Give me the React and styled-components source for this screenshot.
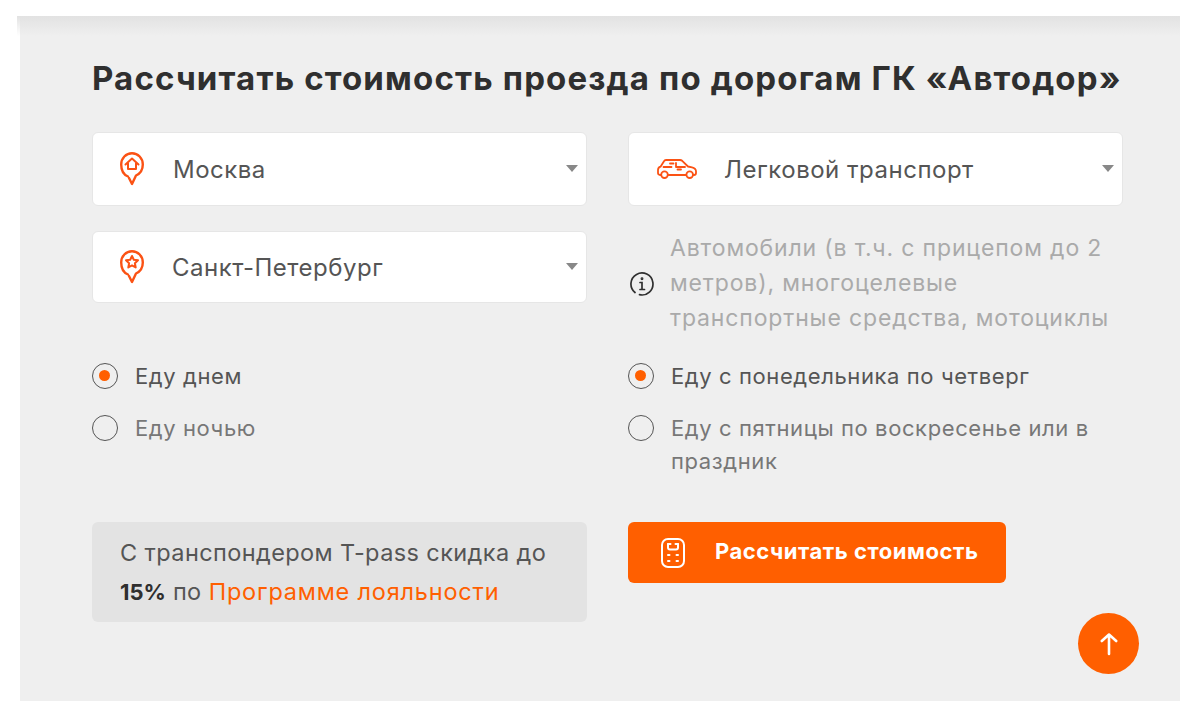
import React from 'react';
import styled, { createGlobalStyle } from 'styled-components';

const ORANGE = '#ff5f00';

const HomePin = () => (
  <svg width="24" height="34" viewBox="0 0 24 34" fill="none" stroke="#fb5214" strokeWidth="2.400" strokeLinecap="round" strokeLinejoin="round">
    <path d="M8 24.500C3.800 22.800 1.200 18.900 1.200 12.500 1.200 6.200 6 1.200 12 1.200s10.800 5 10.800 11.300c0 4.900-2.900 9.200-6.800 11L12 32l-3-6" />
    <path d="M5.500 12.500 12 6.500l6.500 6M8 11v6h8v-6" strokeWidth="2" />
  </svg>
);

const StarPin = () => (
  <svg width="24" height="34" viewBox="0 0 24 34" fill="none" stroke="#fb5214" strokeWidth="2.400" strokeLinecap="round" strokeLinejoin="round">
    <path d="M8 24.500C3.800 22.800 1.200 18.900 1.200 12.500 1.200 6.200 6 1.200 12 1.200s10.800 5 10.800 11.300c0 4.900-2.900 9.200-6.800 11L12 32l-3-6" />
    <path d="m12 6 1.800 3.800 4.200.5-3.100 2.900.8 4.300-3.700-2.100-3.700 2.100.8-4.300-3.100-2.900 4.200-.5z" strokeWidth="2" />
  </svg>
);

const CarIcon = () => (
  <svg width="40" height="20" viewBox="0 0 40 20" fill="none" stroke="#fb5214" strokeWidth="1.800" strokeLinecap="round" strokeLinejoin="round">
    <path d="M4 16H3c-1.200 0-2-.8-2-2v-3c0-1.600.8-2.800 2.500-3.300L7 2.200C7.400 1.400 8.200 1 9 1h14c.9 0 1.600.3 2.200.8L31 7.500l4 .8c2.200.5 4 2.100 4 4V14c0 1.200-.8 2-2 2h-.5" />
    <path d="M11.500 16H29" />
    <circle cx="7.500" cy="15.700" r="3.300" />
    <circle cx="32.700" cy="15.700" r="3.300" />
    <path d="M6.500 8h8M19 8h9M13 4.500h3.500M19 4v4M20.500 10.500H24" />
  </svg>
);

const InfoIcon = () => (
  <svg width="24" height="24" viewBox="0 0 24 24" fill="none" stroke="#2f2f2f" strokeWidth="1.700" strokeLinecap="round">
    <path d="M5 20.500A11 11 0 1 1 9.500 22.700" />
    <path d="M10 10.500h2v7M10 17.500h4.500" />
    <circle cx="12" cy="6.800" r="0.600" />
  </svg>
);

const CalcIcon = () => (
  <svg width="24" height="30" viewBox="0 0 24 30" fill="none" stroke="#fff" strokeWidth="2" strokeLinecap="round" strokeLinejoin="round">
    <rect x="1" y="1" width="22" height="28" rx="6" />
    <path d="M7 6v3.500c0 1.300.8 2 2 2h6c1.200 0 2-.7 2-2V6" />
    <path d="M7 6h2.500M14.500 6H17M7 17h1.500M15.500 17H17M7 23h1.500M15.500 23H17" />
  </svg>
);

const ArrowIcon = () => (
  <svg width="18" height="24" viewBox="0 0 18 24" fill="none" stroke="#fff" strokeWidth="2.600" strokeLinecap="round" strokeLinejoin="round">
    <path d="M9 22V2.500M1.800 9 9 2.500 16.200 9" />
  </svg>
);

const App = () => (
  <>
    <GlobalStyle />
    <Page>
      <Panel>
        <Title>Рассчитать стоимость проезда по дорогам ГК «Автодор»</Title>
        <FormGrid>
          <SelectBox $height={74} $iconGap={29} $iconLeft={27}>
            <HomePin />
            <SelectText>Москва</SelectText>
            <Caret />
          </SelectBox>
          <SelectBox $height={74} $iconGap={27} $iconLeft={28}>
            <CarIcon />
            <SelectText>Легковой транспорт</SelectText>
            <Caret />
          </SelectBox>
          <SelectBox $height={72} $iconGap={28} $iconLeft={27}>
            <StarPin />
            <SelectText>Санкт-Петербург</SelectText>
            <Caret />
          </SelectBox>
          <InfoRow>
            <InfoIcon />
            <InfoText>
              Автомобили (в т.ч. с прицепом до 2 метров), многоцелевые транспортные средства, мотоциклы
            </InfoText>
          </InfoRow>
          <RadioGroup>
            <RadioRow>
              <RadioMark $checked />
              <RadioLabel $checked>Еду днем</RadioLabel>
            </RadioRow>
            <RadioRow>
              <RadioMark />
              <RadioLabel>Еду ночью</RadioLabel>
            </RadioRow>
          </RadioGroup>
          <RadioGroup>
            <RadioRow>
              <RadioMark $checked />
              <RadioLabel $checked>Еду с понедельника по четверг</RadioLabel>
            </RadioRow>
            <RadioRow>
              <RadioMark />
              <RadioLabel>Еду с пятницы по воскресенье или в праздник</RadioLabel>
            </RadioRow>
          </RadioGroup>
          <Promo>
            <PromoLine>С транспондером T-pass скидка до</PromoLine>
            <PromoLine>
              <b>15%</b> по <PromoLink>Программе лояльности</PromoLink>
            </PromoLine>
          </Promo>
          <div>
            <CalcButton>
              <CalcIcon />
              Рассчитать стоимость
            </CalcButton>
          </div>
        </FormGrid>
        <ScrollTop>
          <ArrowIcon />
        </ScrollTop>
      </Panel>
    </Page>
  </>
);

export default App;

const GlobalStyle = createGlobalStyle`
  html, body {
    margin: 0;
    padding: 0;
    background: #fff;
    font-family: 'Inter', 'Noto Sans', sans-serif;
  }
`;

const Page = styled.div`
  width: 1200px;
  height: 722px;
  padding: 16px 20px 21px;
  box-sizing: border-box;
`;

const Panel = styled.div`
  position: relative;
  height: 100%;
  padding: 42px 57px 0 72px;
  box-sizing: border-box;
  background: #efefef;

  &::before {
    content: '';
    position: absolute;
    top: 0;
    left: -3px;
    right: 0;
    height: 20px;
    background: linear-gradient(#e2e2e2, rgba(239, 239, 239, 0));
  }
`;

const Title = styled.h1`
  position: relative;
  margin: 0;
  font-size: 33px;
  line-height: 41px;
  font-weight: 700;
  letter-spacing: 1.15px;
  color: #2f2f2f;
  white-space: nowrap;
`;

const FormGrid = styled.div`
  display: grid;
  grid-template-columns: 495px 495px;
  grid-template-rows: 74px 107px 134px auto;
  column-gap: 41px;
  row-gap: 25px;
  align-items: start;
  margin-top: 33px;
`;

const SelectBox = styled.div`
  position: relative;
  display: flex;
  align-items: center;
  gap: ${props => props.$iconGap}px;
  height: ${props => props.$height}px;
  padding-left: ${props => props.$iconLeft}px;
  box-sizing: border-box;
  background: #fff;
  border: 1px solid #e6e6e6;
  border-radius: 6px;
`;

const SelectText = styled.span`
  font-size: 24px;
  letter-spacing: 0.5px;
  color: #555;
`;

const Caret = styled.span`
  position: absolute;
  right: 8px;
  top: 50%;
  margin-top: -4px;
  border-left: 6px solid transparent;
  border-right: 6px solid transparent;
  border-top: 7px solid #888;
`;

const InfoRow = styled.div`
  display: flex;
  align-items: center;
  gap: 16px;
  padding-left: 2px;
`;

const InfoText = styled.div`
  width: 450px;
  font-size: 23px;
  line-height: 35px;
  letter-spacing: 0.85px;
  color: #aaa;
`;

const RadioGroup = styled.div`
  display: flex;
  flex-direction: column;
  gap: 22px;
`;

const RadioRow = styled.div`
  display: flex;
  align-items: flex-start;
  gap: 17px;
`;

const RadioMark = styled.span`
  position: relative;
  flex: none;
  width: 26px;
  height: 26px;
  box-sizing: border-box;
  border: 1.5px solid #555;
  border-radius: 50%;

  &::after {
    content: '';
    display: ${props => (props.$checked ? 'block' : 'none')};
    position: absolute;
    top: 6px;
    left: 6px;
    width: 11px;
    height: 11px;
    border-radius: 50%;
    background: ${ORANGE};
  }
`;

const RadioLabel = styled.span`
  font-size: 22px;
  line-height: 33px;
  margin-top: -3px;
  letter-spacing: 0.6px;
  color: ${props => (props.$checked ? '#555' : '#777')};
`;

const Promo = styled.div`
  height: 100px;
  padding: 11px 28px 0;
  box-sizing: border-box;
  background: #e3e3e3;
  border-radius: 6px;
`;

const PromoLine = styled.div`
  font-size: 23.500px;
  line-height: 39px;
  letter-spacing: 0.4px;
  color: #555;
  white-space: nowrap;

  b {
    font-size: 22px;
    letter-spacing: 0;
    color: #2f2f2f;
  }
`;

const PromoLink = styled.span`
  letter-spacing: 0.8px;
  color: ${ORANGE};
`;

const CalcButton = styled.button`
  display: flex;
  align-items: center;
  gap: 30px;
  width: 378px;
  height: 61px;
  padding: 0 0 3px 33px;
  box-sizing: border-box;
  background: ${ORANGE};
  border: none;
  border-radius: 6px;
  color: #fff;
  font-family: inherit;
  font-size: 22px;
  font-weight: 700;
  letter-spacing: 0.55px;

  svg {
    margin-top: 3px;
  }
`;

const ScrollTop = styled.div`
  position: absolute;
  top: 597px;
  left: 1058px;
  display: flex;
  align-items: center;
  justify-content: center;
  width: 61px;
  height: 61px;
  border-radius: 50%;
  background: ${ORANGE};
`;
